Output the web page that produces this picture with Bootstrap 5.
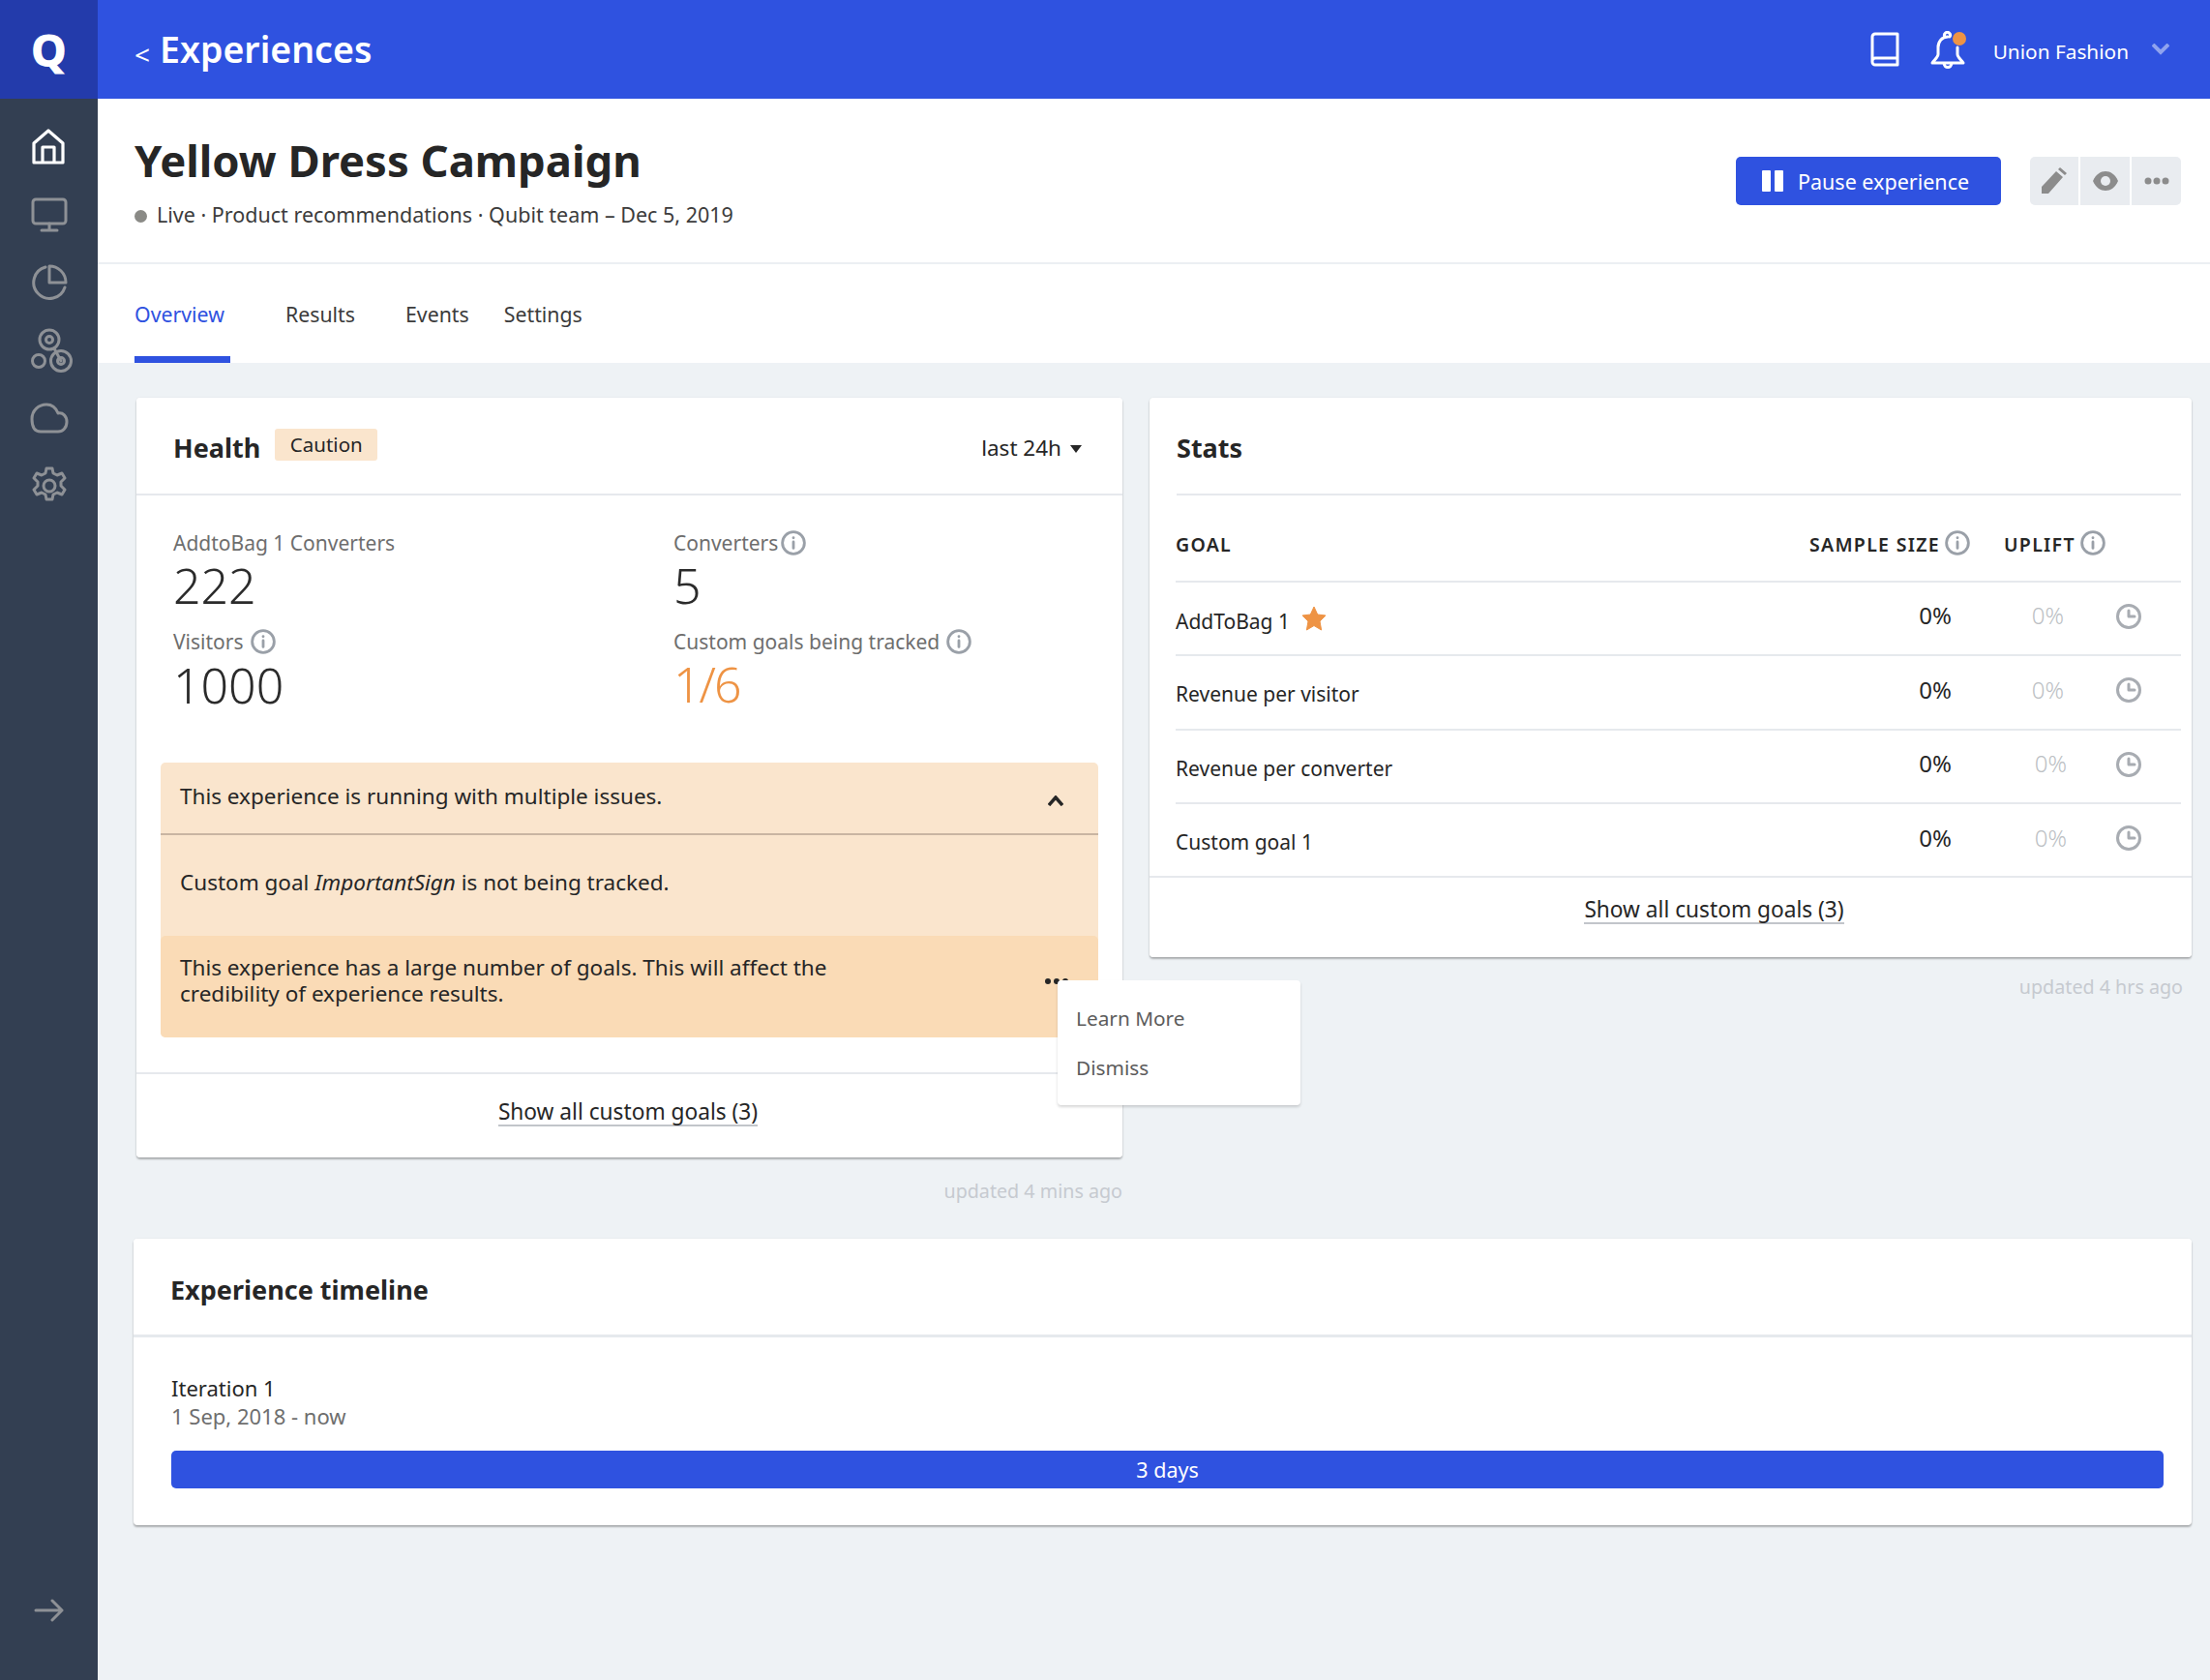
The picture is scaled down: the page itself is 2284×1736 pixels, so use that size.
<!DOCTYPE html>
<html lang="en">
<head>
<meta charset="utf-8">
<title>Yellow Dress Campaign</title>
<link href="https://cdn.jsdelivr.net/npm/bootstrap@5.3.0/dist/css/bootstrap.min.css" rel="stylesheet">
<style>
:root{--qb:#2f52e0;--ink:#262626;--mut:#6b6b6b;--line:#e6e9ed;--org:#ee9344}
html,body{height:100%}
body{font-family:"Noto Sans","Liberation Sans",sans-serif;font-size:21px;color:var(--ink);background:#eef2f5;line-height:27px;overflow:hidden}
.shell{min-height:1736px}
.rail{width:101px;background:#333f52;min-height:1736px}
.logo-cell{height:102px;background:#233bab;color:#fff;font-size:47px;font-weight:800;line-height:1}
.rail-item{height:70px}
.rail-top{padding-top:15px}
.rail-ico{fill:none;stroke:#8e9196;stroke-width:3;stroke-linecap:round;stroke-linejoin:round}
.rail-ico.on{stroke:#fff;stroke-width:3.2}
.net-ico{margin-left:5px}
.rail-foot{height:84px;padding-top:0}
.topbar{height:102px;background:var(--qb);color:#fff;padding:0 42px 0 38px}
.crumb-back{font-size:28px;margin-right:10px;line-height:1;padding-top:10px}
.crumb{font-size:37.500px;font-weight:600;line-height:1}
.top-ico{fill:none;stroke:#fff;stroke-width:3;stroke-linejoin:round;stroke-linecap:round}
.bell-wrap{position:relative;margin-left:32px;margin-right:29px;height:38px}
.bell-dot{position:absolute;right:-1px;top:1px;width:14px;height:14px;border-radius:50%;background:var(--org)}
.org-name{font-size:20.800px;padding-top:4px}
.top-chev{fill:none;stroke:#8fa3ee;stroke-width:4;margin-left:24px}
.pagehead{height:171px;background:#fff;border-bottom:2px solid #eceff3;padding:0 30px 0 38px}
.pagehead h1{font-size:45.400px;font-weight:700;line-height:56px;margin:35px 0 0}
.meta{font-size:21.500px;color:#3c3c3c;margin-top:15px}
.live-dot{width:13px;height:13px;background:#8a8a86;border-radius:50%;display:inline-block;margin-right:10px}
.btn.pause{background:var(--qb);border:0;color:#fff;width:274px;height:50px;border-radius:5px;font-size:21.500px;padding:0 0 0 27px;margin-right:30px;display:flex;align-items:center;gap:15px}
.pause-label{padding-top:4px}
.btn.tool{background:#e9ecf0;border:0;height:50px;width:51px;padding:0;border-radius:0;margin-right:2px;display:flex;align-items:center;justify-content:center}
.btn.tool:first-child{border-radius:5px 0 0 5px;width:50px}
.btn.tool:last-child{border-radius:0 5px 5px 0;margin-right:0}
.tabbar{height:102px;background:#fff;padding-left:38px}
.tabbar .nav-link{color:#3c3c3c;font-size:21.300px;padding:38px 0 0;height:102px;line-height:27px;border-bottom:7px solid transparent}
.tabbar .nav-link.active{color:var(--qb);border-bottom-color:var(--qb);width:99px}
.tab-results{margin-left:57px}
.tab-events{margin-left:52px}
.tab-settings{margin-left:36px}
.content{padding:36px 19px 0 37px}
.twocol{display:flex;gap:28px;align-items:flex-start;padding-left:3px}
.colh{width:1019px}.cols{width:1077px}
.panel.card{border:0;border-radius:4px;box-shadow:0 2px 2px rgba(0,0,0,.28),0 0 2px rgba(0,0,0,.08);background:#fff}
.panel .card-header{background:#fff;border:0;border-bottom:2px solid var(--line);height:101px;padding:4px 39px 0 38px;border-radius:4px 4px 0 0}
.sect-t{font-size:27px;font-weight:700;line-height:1}
.caution.badge{background:#fae5cd;color:var(--ink);font-size:20.500px;font-weight:400;border-radius:3px;padding:0;width:106px;height:33px;line-height:33px;margin-left:15px;margin-top:-7px}
.range{font-size:22.500px;padding-right:3px}
.caret-t{display:inline-block;border:6.500px solid transparent;border-top:8px solid #262626;border-bottom:0;margin-left:9px;vertical-align:3px}
.metrics{display:grid;grid-template-columns:517px 1fr;padding:33px 39px 0 38px;height:276px;align-content:start}
.m-lab{color:#6e6e6e;font-size:21px;line-height:32px;display:flex;align-items:center}
.m-num{font-size:50px;font-weight:300;line-height:55px;height:69px;color:#2b2b2b;margin-top:1px}
.m-num.lower{margin-top:2px}
.m-num.warn{color:var(--org);letter-spacing:-2px;line-height:52px}
.inf{fill:none;stroke:#9aa0a8;stroke-width:2.600;stroke-linecap:round;margin-left:7px}
.issue{margin:0 25px 36px 25px;border-radius:5px;background:#fae5cd;font-size:22.500px}
.issue-h{height:75px;border-bottom:2px solid #c9b5a2;padding:0 36px 5px 20px}
.chev-up{margin-top:10px}
.issue-b{height:104px;padding:35px 20px 0}
.issue-c{height:105px;background:#fadbb6;border-radius:5px;padding:19px 20px 0;position:relative}
.issue-c p{margin:0;width:700px}
.mini-dots{position:absolute;left:914px;top:44px}
.panel-foot.card-footer{background:#fff;border:0;border-top:2px solid var(--line);text-align:center;height:88px;padding:26px 3px 0 0;border-radius:0 0 4px 4px}
.ghost-link{color:var(--ink);text-decoration:none;border-bottom:2px solid #c2c5ca;display:inline-block;line-height:26px;font-size:22.700px}
.popup.dropdown-menu{display:block;position:absolute;left:927px;top:46px;width:251px;height:129px;border:0;border-radius:4px;padding:14px 0 0;box-shadow:0 2px 3px rgba(0,0,0,.16);z-index:5}
.popup .dropdown-item{color:#5c5c5c;font-size:20.800px;padding:0 19px;line-height:51px;height:51px}
.stamp{color:#c6cad0;font-size:19.700px;text-align:right;line-height:26px;margin-top:22px}
.stat-h{padding:0 11px 0 28px}
.stat-h .card-header{padding:4px 0 0;margin:0}
.stat-wrap{padding:0 11px 0 27px}
.stat-row{display:grid;grid-template-columns:1fr 189px 116px 121px;align-items:center;height:76.500px;border-bottom:2px solid var(--line)}
.stat-row:last-child{border-bottom:0;height:74px}
.stat-top{display:grid;grid-template-columns:1fr 201px 183px;align-items:center;height:89.500px;padding-top:14px;border-bottom:2px solid var(--line);font-size:19.500px;font-weight:600;letter-spacing:1.300px}
.stat-top .inf{margin-left:5px;margin-top:-3px}
.goal-n{padding-top:5px}
.v0{text-align:right;font-size:24px;padding-bottom:6px}
.v1{text-align:right;color:#bcbfc4;font-size:24px;font-weight:300;padding-bottom:6px}
.v1.shift{margin-right:-3px}
.clk{fill:none;stroke:#a8acb2;stroke-width:3;stroke-linecap:round;stroke-linejoin:round;margin-left:54px;display:block;margin-top:-4px}
.star{fill:var(--org);margin-left:12px;vertical-align:-2px}
.stat-foot.card-footer{background:#fff;border:0;border-top:2px solid var(--line);text-align:center;height:84px;padding:20px 0 0 90px;border-radius:0 0 4px 4px}
.rightstamp{padding-right:9px;margin-top:18px}
.timeline{margin-top:36px;height:296px}
.timeline .card-header{height:102px;padding:5px 39px 0 38px;border-bottom:3px solid var(--line)}
.tl-body{padding:38px 29px 0 39px;font-size:22px}
.tl-n{line-height:29px}
.tl-d{color:#6e6e6e;line-height:29px}
.tl-bar.progress{height:39px;background:var(--qb);border-radius:5px;margin-top:21px;font-size:21.500px;color:#fff;line-height:39px;display:block;text-align:center}
</style>
</head>
<body>
<div class="d-flex shell">
  <aside class="rail d-flex flex-column flex-shrink-0">
    <div class="logo-cell d-flex align-items-center justify-content-center">Q</div>
    <div class="rail-top flex-grow-1">
      <div class="rail-item d-flex align-items-center justify-content-center">
        <svg class="rail-ico on" width="36" height="38" viewBox="0 0 36 38"><path d="M2 15 17 2l15 13v20H2zM11 35V19h12v16"/></svg>
      </div>
      <div class="rail-item d-flex align-items-center justify-content-center">
        <svg class="rail-ico" width="38" height="36" viewBox="0 0 38 36"><rect x="2" y="2" width="34" height="25" rx="3"/><path d="M19 27v6M11 34h16"/></svg>
      </div>
      <div class="rail-item d-flex align-items-center justify-content-center">
        <svg class="rail-ico" width="38" height="38" viewBox="0 0 38 38"><path d="M15 3a16.500 16.500 0 1 0 20 21"/><path d="M19 2c9 0 17 7 17 17H19z"/></svg>
      </div>
      <div class="rail-item d-flex align-items-center justify-content-center">
        <svg class="rail-ico net-ico" width="44" height="47" viewBox="0 0 44 47"><circle cx="20" cy="12" r="10"/><circle cx="20" cy="12" r="3.500"/><circle cx="32" cy="34" r="10.500"/><circle cx="32" cy="34" r="3.500"/><circle cx="9" cy="34" r="6.500"/><path d="M25 21l7 13"/></svg>
      </div>
      <div class="rail-item d-flex align-items-center justify-content-center">
        <svg class="rail-ico" width="40" height="32" viewBox="0 0 40 32"><path d="M11 30C5 30 2 25 2 17 2 8 9 2 17 2c6 0 10 4 12 9 5-1 9 3 9 9 0 6-4 10-9 10z"/></svg>
      </div>
      <div class="rail-item d-flex align-items-center justify-content-center">
        <svg class="rail-ico" width="40" height="40" viewBox="0 0 40 40"><circle cx="20" cy="20" r="6"/><path d="M17 2h6l1 5 4 2 5-2 3 5-4 4v4l4 4-3 5-5-2-4 2-1 5h-6l-1-5-4-2-5 2-3-5 4-4v-4l-4-4 3-5 5 2 4-2z"/></svg>
      </div>
    </div>
    <div class="rail-foot d-flex justify-content-center">
      <svg class="rail-ico" width="32" height="24" viewBox="0 0 32 24"><path d="M2 12h27M19 2l10 10-10 10"/></svg>
    </div>
  </aside>
  <main class="flex-grow-1 d-flex flex-column">
    <header class="topbar d-flex align-items-center">
      <span class="crumb-back">&lt;</span><span class="crumb">Experiences</span>
      <div class="ms-auto d-flex align-items-center">
        <svg class="top-ico" width="30" height="36" viewBox="0 0 30 36"><path d="M28 2H5a3 3 0 0 0-3 3v26a3 3 0 0 0 3 3h23zM2 30a3 3 0 0 1 3-3h23"/></svg>
        <div class="bell-wrap">
          <svg class="top-ico" width="36" height="40" viewBox="0 0 36 40"><path d="M15 6a3 3 0 1 1 5 0M8 17c0-6 4-11 10-11M28 17v7c0 3 4 6 6 9H2c2-3 6-6 6-9v-7M14 33c0 6 8 6 8 0"/></svg>
          <span class="bell-dot"></span>
        </div>
        <span class="org-name">Union Fashion</span>
        <svg class="top-chev" width="18" height="12" viewBox="0 0 18 12"><path d="M1 1l8 8 8-8"/></svg>
      </div>
    </header>
    <section class="pagehead d-flex justify-content-between align-items-center">
      <div class="align-self-start">
        <h1>Yellow Dress Campaign</h1>
        <div class="meta"><span class="live-dot"></span>Live · Product recommendations · Qubit team – Dec 5, 2019</div>
      </div>
      <div class="d-flex">
        <button type="button" class="btn pause"><svg width="22" height="22" viewBox="0 0 22 22" fill="#fff"><rect width="9" height="22" rx="1"/><rect x="13" width="9" height="22" rx="1"/></svg><span class="pause-label">Pause experience</span></button>
        <div class="d-flex tool-set">
          <button type="button" class="btn tool" aria-label="Edit"><svg width="26" height="28" viewBox="0 0 26 28" fill="#8c8c8c"><path d="M0 27v-7L15 4l7 6L7 27zM17 2l2-2 7 6-2 2z"/></svg></button>
          <button type="button" class="btn tool" aria-label="Preview"><svg width="26" height="20" viewBox="0 0 26 20"><path fill="#8c8c8c" d="M0 10C3 3 8 0 13 0s10 3 13 10c-3 7-8 10-13 10S3 17 0 10z"/><circle cx="13" cy="10" r="5" fill="#e9ecf0"/></svg></button>
          <button type="button" class="btn tool" aria-label="More"><svg width="26" height="8" viewBox="0 0 26 8" fill="#8c8c8c"><circle cx="4" cy="4" r="3.500"/><circle cx="13" cy="4" r="3.500"/><circle cx="22" cy="4" r="3.500"/></svg></button>
        </div>
      </div>
    </section>
    <nav class="nav tabbar">
      <a class="nav-link active" href="#">Overview</a>
      <a class="nav-link tab-results" href="#">Results</a>
      <a class="nav-link tab-events" href="#">Events</a>
      <a class="nav-link tab-settings" href="#">Settings</a>
    </nav>
    <div class="content">
      <div class="twocol">
        <div class="colh">
          <div class="card panel">
            <div class="card-header d-flex align-items-center">
              <span class="sect-t">Health</span>
              <span class="badge caution">Caution</span>
              <span class="range ms-auto">last 24h<span class="caret-t"></span></span>
            </div>
            <div class="metrics">
              <div><div class="m-lab">AddtoBag 1 Converters</div><div class="m-num">222</div></div>
              <div><div class="m-lab">Converters<svg class="inf" style="margin-left:3px" width="26" height="26" viewBox="0 0 24 24"><circle cx="12" cy="12" r="10.500"/><path d="M12 11v6M12 7v.2"/></svg></div><div class="m-num">5</div></div>
              <div><div class="m-lab">Visitors<svg class="inf" width="26" height="26" viewBox="0 0 24 24"><circle cx="12" cy="12" r="10.500"/><path d="M12 11v6M12 7v.2"/></svg></div><div class="m-num lower">1000</div></div>
              <div><div class="m-lab">Custom goals being tracked<svg class="inf" width="26" height="26" viewBox="0 0 24 24"><circle cx="12" cy="12" r="10.500"/><path d="M12 11v6M12 7v.2"/></svg></div><div class="m-num lower warn">1/6</div></div>
            </div>
            <div class="issue">
              <div class="issue-h d-flex align-items-center justify-content-between">
                <span>This experience is running with multiple issues.</span>
                <svg class="chev-up" width="16" height="11" viewBox="0 0 16 11" fill="none" stroke="#262626" stroke-width="3.500"><path d="M1 10l7-8 7 8"/></svg>
              </div>
              <div class="issue-b">Custom goal <em>ImportantSign</em> is not being tracked.</div>
              <div class="issue-c">
                <p>This experience has a large number of goals. This will affect the credibility of experience results.</p>
                <svg class="mini-dots" width="26" height="6" viewBox="0 0 26 6" fill="#262626"><circle cx="3" cy="3" r="3"/><circle cx="12" cy="3" r="3"/><circle cx="21" cy="3" r="3"/></svg>
                <ul class="dropdown-menu popup">
                  <li><a class="dropdown-item" href="#">Learn More</a></li>
                  <li><a class="dropdown-item" href="#">Dismiss</a></li>
                </ul>
              </div>
            </div>
            <div class="card-footer panel-foot"><a class="ghost-link" href="#">Show all custom goals (3)</a></div>
          </div>
          <div class="stamp">updated 4 mins ago</div>
        </div>
        <div class="cols">
          <div class="card panel">
            <div class="stat-h"><div class="card-header d-flex align-items-center"><span class="sect-t">Stats</span></div></div>
            <div class="stat-wrap">
              <div class="stat-top">
                <span>GOAL</span>
                <span class="d-flex align-items-center">SAMPLE SIZE<svg class="inf" width="26" height="26" viewBox="0 0 24 24"><circle cx="12" cy="12" r="10.500"/><path d="M12 11v6M12 7v.2"/></svg></span>
                <span class="d-flex align-items-center">UPLIFT<svg class="inf" width="26" height="26" viewBox="0 0 24 24"><circle cx="12" cy="12" r="10.500"/><path d="M12 11v6M12 7v.2"/></svg></span>
              </div>
              <div class="stat-row">
                <span class="goal-n">AddToBag 1<svg class="star" width="26" height="26" viewBox="0 0 26 26"><path d="M13 1l3.700 8 8.300 1-6 6 1.600 9L13 20.500 5.400 25 7 16l-6-6 8.300-1z" stroke="#ee9344" stroke-linejoin="round"/></svg></span>
                <span class="v0">0%</span><span class="v1">0%</span>
                <span><svg class="clk" width="26" height="26" viewBox="0 0 26 26"><circle cx="13" cy="13" r="11.500"/><path d="M13 7v6h6"/></svg></span>
              </div>
              <div class="stat-row">
                <span class="goal-n">Revenue per visitor</span>
                <span class="v0">0%</span><span class="v1">0%</span>
                <span><svg class="clk" width="26" height="26" viewBox="0 0 26 26"><circle cx="13" cy="13" r="11.500"/><path d="M13 7v6h6"/></svg></span>
              </div>
              <div class="stat-row">
                <span class="goal-n">Revenue per converter</span>
                <span class="v0">0%</span><span class="v1 shift">0%</span>
                <span><svg class="clk" width="26" height="26" viewBox="0 0 26 26"><circle cx="13" cy="13" r="11.500"/><path d="M13 7v6h6"/></svg></span>
              </div>
              <div class="stat-row">
                <span class="goal-n">Custom goal 1</span>
                <span class="v0">0%</span><span class="v1 shift">0%</span>
                <span><svg class="clk" width="26" height="26" viewBox="0 0 26 26"><circle cx="13" cy="13" r="11.500"/><path d="M13 7v6h6"/></svg></span>
              </div>
            </div>
            <div class="card-footer stat-foot"><a class="ghost-link" href="#">Show all custom goals (3)</a></div>
          </div>
          <div class="stamp rightstamp">updated 4 hrs ago</div>
        </div>
      </div>
      <div class="card panel timeline">
        <div class="card-header d-flex align-items-center"><span class="sect-t">Experience timeline</span></div>
        <div class="tl-body">
          <div class="tl-n">Iteration 1</div>
          <div class="tl-d">1 Sep, 2018 - now</div>
          <div class="progress tl-bar">3 days</div>
        </div>
      </div>
    </div>
  </main>
</div>
</body>
</html>
